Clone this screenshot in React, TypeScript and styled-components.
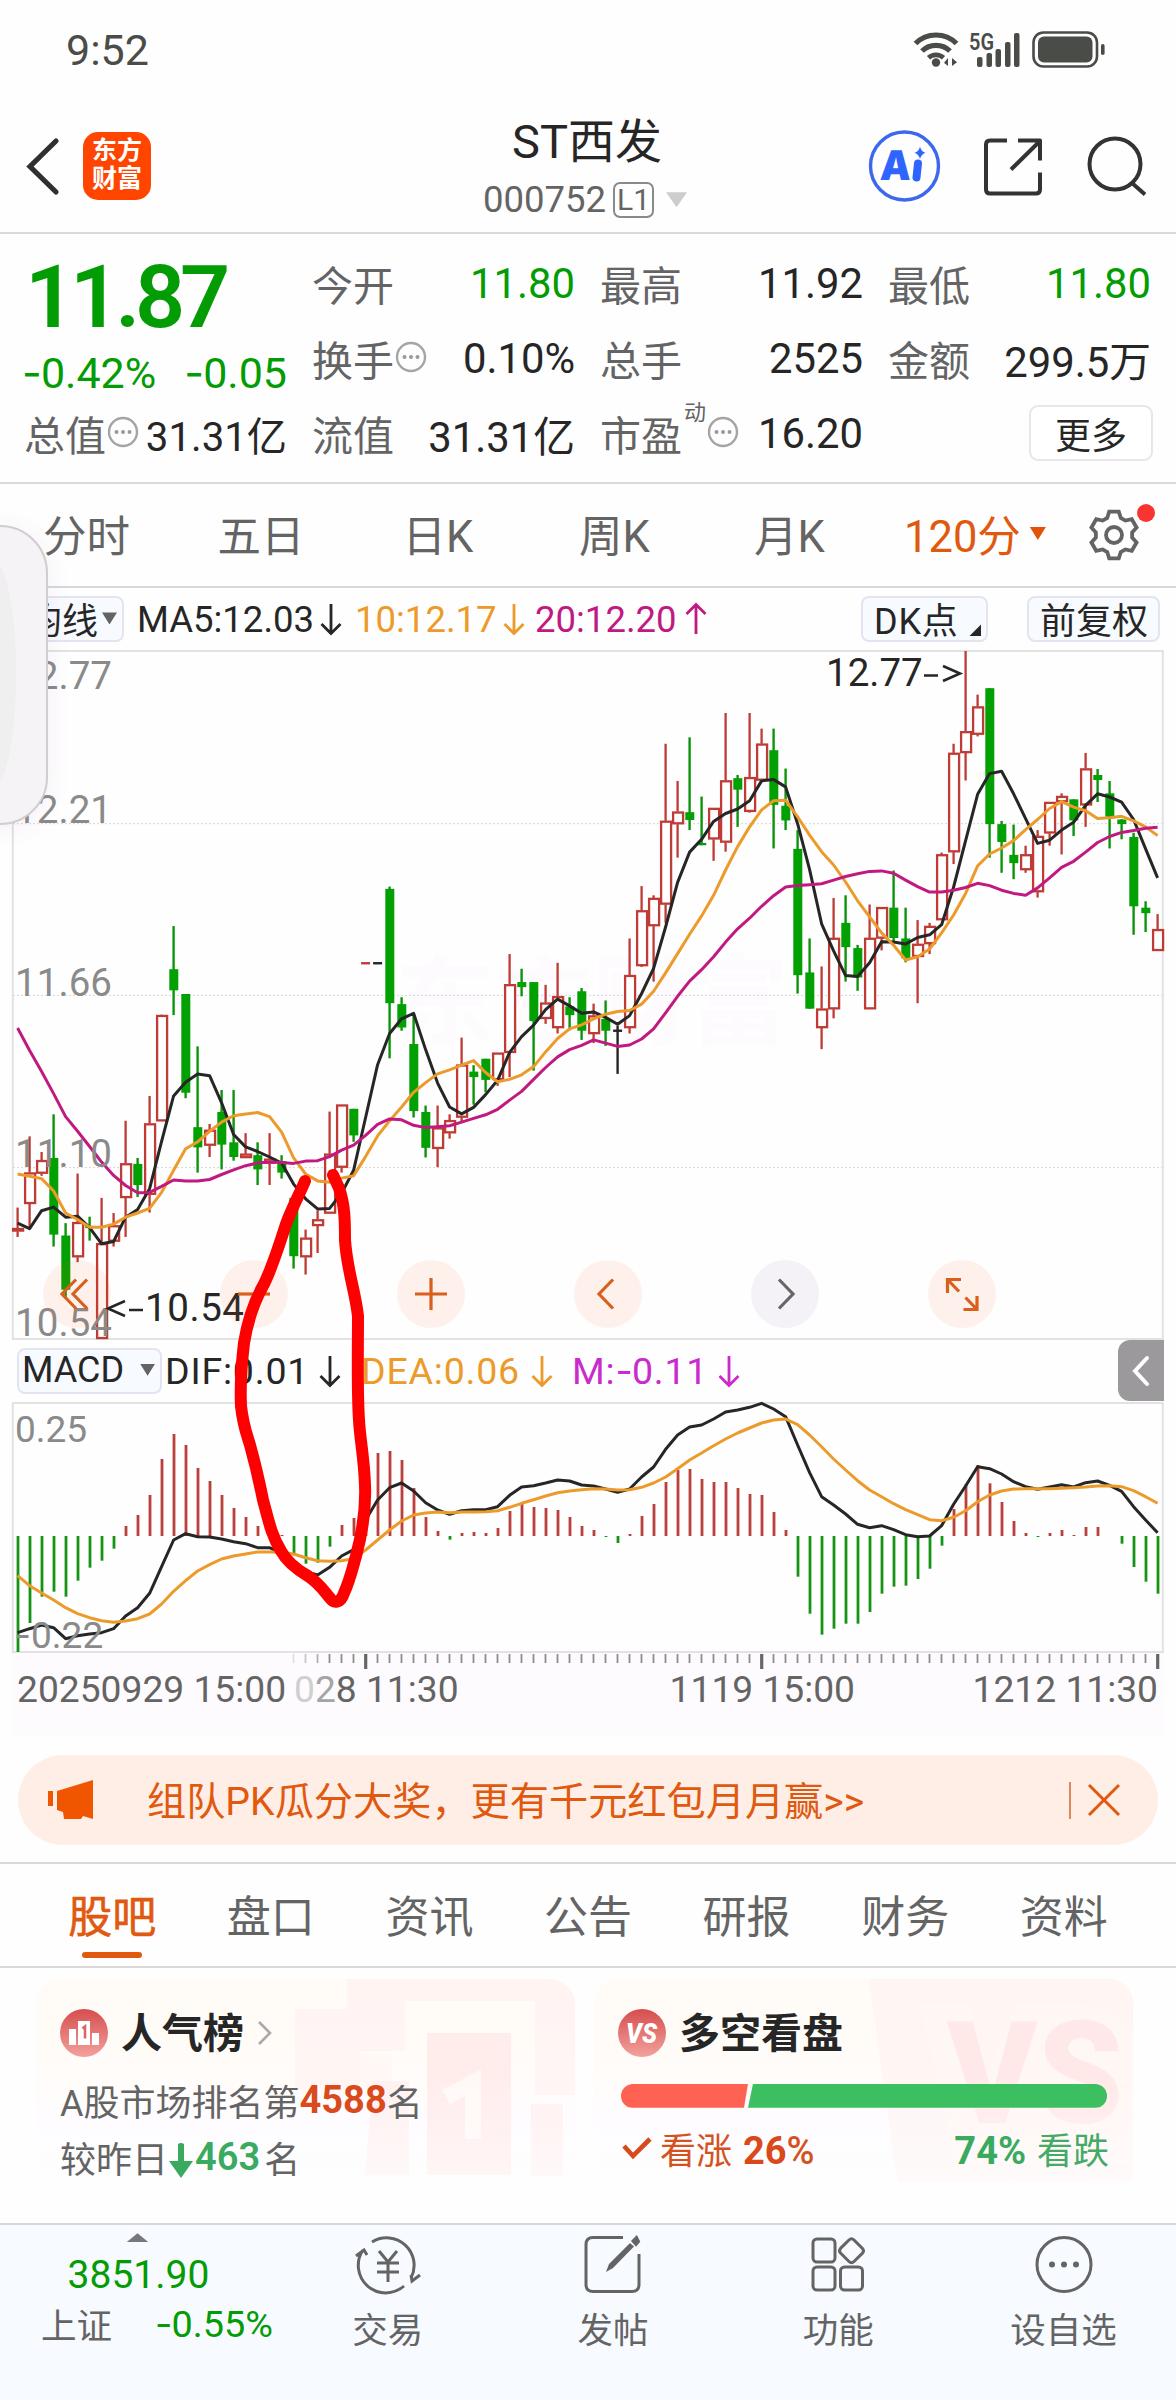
import React from "react";
import styled, { createGlobalStyle } from "styled-components";

const FONT = `Roboto, "Noto Sans CJK SC", sans-serif`;
const ORANGE = "#e0590f";
const GREEN = "#049c04";
const RED = "#bf3b35";
const INK = "#262626";
const GREY = "#646464";
const AMBER = "#ec9b2b";
const PLUM = "#c01a80";

const Global = createGlobalStyle`
  body { margin: 0; background: #fefefe; }
  *, *::before, *::after { box-sizing: border-box; }
`;

const Page = styled.div`
  position: relative;
  width: 1176px;
  height: 2400px;
  overflow: hidden;
  background: #fefefe;
  color: ${INK};
  font-family: ${FONT};
  display: flex;
  flex-direction: column;
`;

/* ---------- status bar ---------- */
const StatusBar = styled.div`
  height: 100px;
  padding: 0 70px 0 66px;
  display: flex;
  align-items: center;
  justify-content: space-between;
  color: #4a4c48;
`;
const Clock = styled.span`font-size: 43px; line-height: 50px;`;

/* ---------- header ---------- */
const Header = styled.header`
  height: 134px;
  border-bottom: 2px solid #dadada;
  padding: 0 28px 0 24px;
  display: grid;
  grid-template-columns: 300px 1fr 300px;
`;
const HeaderLeft = styled.div`
  display: flex;
  gap: 19px;
  padding-top: 32px;
`;
const Logo = styled.div`
  width: 68px;
  height: 68px;
  border-radius: 15px;
  background: #ff4500;
  color: #fff;
  font-size: 25px;
  font-weight: 700;
  line-height: 28px;
  padding-top: 5px;
  text-align: center;
`;
const TitleBlock = styled.div`
  display: flex;
  flex-direction: column;
  align-items: center;
`;
const Title = styled.div`
  margin-top: 12px;
  font-size: 47px;
  line-height: 60px;
  padding-left: 2px;
  white-space: nowrap;
`;
const SubTitle = styled.div`
  display: flex;
  align-items: center;
  height: 40px;
  margin-top: 8px;
  padding-left: 0;
  margin-left: -2px;
  font-size: 36.5px;
  color: ${GREY};
`;
const LevelTag = styled.span`
  border: 2px solid #8a8a8a;
  border-radius: 7px;
  width: 41px;
  height: 36px;
  margin: 0 12px 0 7px;
  font-size: 30px;
  line-height: 32px;
  text-align: center;
`;
const HeaderRight = styled.div`
  display: flex;
  justify-content: flex-end;
  padding-top: 28px;
`;
const Triangle = styled.span<{ $w: number; $h: number; $c: string; $up?: boolean }>`
  display: block;
  flex: none;
  width: ${(p) => p.$w}px;
  height: ${(p) => p.$h}px;
  background: ${(p) => p.$c};
  clip-path: ${(p) => (p.$up ? "polygon(50% 0, 100% 100%, 0 100%)" : "polygon(0 0, 100% 0, 50% 100%)")};
`;

/* ---------- quote ---------- */
const Quote = styled.section`
  height: 251px;
  border-bottom: 2px solid #dadada;
  padding: 12px 23px 0 24px;
  display: grid;
  grid-template-columns: repeat(4, 263px);
  grid-template-rows: repeat(3, 75px);
  column-gap: 25px;
`;
const PriceCell = styled.div`
  grid-row: 1 / span 2;
  color: ${GREEN};
`;
const Price = styled.div`
  padding-left: 1px;
  font-size: 88px;
  font-weight: 600;
  line-height: 101px;
  letter-spacing: -5.2px;
  height: 96px;
`;
const Changes = styled.div`
  display: flex;
  justify-content: space-between;
  font-size: 43px;
  line-height: 60px;
  margin-left: -2px;
`;
const Cell = styled.div`
  display: flex;
  align-items: center;
  justify-content: space-between;
  white-space: nowrap;
`;
const Label = styled.span`
  display: flex;
  align-items: center;
  font-size: 41px;
  color: ${GREY};
`;
const Value = styled.span<{ $c?: string; $size?: number }>`
  font-size: ${(p) => p.$size || 41.8}px;
  color: ${(p) => p.$c || INK};
  padding-top: 1px;
`;
const Sup = styled.sup`
  font-size: 22px;
  line-height: 22px;
  align-self: flex-start;
  margin: -1px 0 0 2px;
`;
const MoreButton = styled.button`
  margin-left: auto;
  margin-right: -2px;
  width: 124px;
  height: 56px;
  border: 2px solid #e7e7e9;
  border-radius: 9px;
  background: #fff;
  font: 36px ${FONT};
  color: ${INK};
  padding: 0 0 6px;
`;
const Dash = styled.span`font-family: Inter, sans-serif; letter-spacing: -0.02em;`;

/* ---------- period tabs ---------- */
const Periods = styled.nav`
  height: 104px;
  border-bottom: 2px solid #d8d8da;
  display: flex;
  align-items: center;
  font-size: 43.5px;
  color: ${GREY};
`;
const Period = styled.span<{ $w: number }>`
  width: ${(p) => p.$w}px;
  flex: none;
  margin-top: -3px;
  text-align: center;
`;
const ActivePeriod = styled.span`
  width: 180px;
  margin-top: -3px;
  padding-left: 27px;
  flex: none;
  display: flex;
  align-items: center;
  gap: 9px;
  color: ${ORANGE};
`;
const GearWrap = styled.span`
  position: relative;
  display: flex;
  margin-left: 30px;
`;
const RedDot = styled.i`
  position: absolute;
  top: -4px;
  right: -14px;
  width: 18px;
  height: 18px;
  border-radius: 50%;
  background: #f93532;
`;

/* ---------- indicator rows ---------- */
const IndicatorRow = styled.div<{ $h: number; $wide?: boolean }>`
  height: ${(p) => p.$h}px;
  padding: 0 16px 0 17px;
  display: flex;
  align-items: center;
  font-size: ${(p) => (p.$wide ? 37.5 : 36.5)}px;
  letter-spacing: ${(p) => (p.$wide ? 0.8 : 0)}px;
  white-space: nowrap;
`;
const Chip = styled.button<{ $w: number; $ml?: string; $tri?: number; $pl?: number }>`
  position: relative;
  width: ${(p) => p.$w}px;
  height: 46px;
  margin: 0 0 0 ${(p) => p.$ml || "0"};
  padding: 0 0 2px ${(p) => p.$pl ?? 7}px;
  display: flex;
  align-items: center;
  justify-content: flex-start;
  gap: ${(p) => p.$tri || 0}px;
  border: 2px solid #e2e5ef;
  border-radius: 8px;
  background: #f7faff;
  color: ${INK};
  font: 36px ${FONT};
  white-space: nowrap;
`;
const Corner = styled.i`
  position: absolute;
  right: 5px;
  bottom: 4px;
  width: 12px;
  height: 12px;
  background: ${INK};
  clip-path: polygon(100% 0, 100% 100%, 0 100%);
`;
const Reading = styled.span<{ $c: string; $w: number; $ml?: number }>`
  color: ${(p) => p.$c};
  width: ${(p) => p.$w}px;
  margin-left: ${(p) => p.$ml || 0}px;
  display: flex;
  align-items: center;
  justify-content: space-between;
`;
const Collapse = styled.button`
  margin: 0 -4px 0 auto;
  width: 46px;
  height: 61px;
  border: 0;
  border-radius: 12px 0 0 12px;
  background: #9b999b;
  display: flex;
  align-items: center;
  justify-content: center;
  padding: 0;
`;

/* ---------- charts ---------- */
const ChartBox = styled.div<{ $h: number }>`
  position: relative;
  height: ${(p) => p.$h}px;
  svg { display: block; overflow: visible; }
`;
const ChartTools = styled.div`
  position: absolute;
  left: 43px;
  bottom: 11px;
  display: flex;
  gap: 109px;
`;
const Tool = styled.button<{ $muted?: boolean }>`
  width: 68px;
  height: 68px;
  border: 0;
  border-radius: 50%;
  padding: 0;
  background: ${(p) => (p.$muted ? "rgba(110, 80, 140, 0.07)" : "rgba(255, 90, 30, 0.08)")};
  color: ${(p) => (p.$muted ? "#666" : "#d8601c")};
`;
const Axis = styled.div`
  height: 84px;
  margin: 0 12px;
  background: #fefbff;
  display: flex;
  align-items: center;
  padding: 0 6px 10px 5px;
  font-size: 37.2px;
  color: ${GREY};
  white-space: nowrap;
`;
const Stamp = styled.span<{ $ml?: string }>`margin-left: ${(p) => p.$ml || "0"};`;
const Fade = styled.span<{ $c: string }>`color: ${(p) => p.$c};`;

/* ---------- banner ---------- */
const Banner = styled.div`
  margin: 19px 18px 17px;
  height: 90px;
  border-radius: 45px;
  background: #ffeee6;
  display: flex;
  align-items: center;
  padding: 0 37px 0 29px;
  font-size: 39.2px;
  color: ${ORANGE};
  white-space: nowrap;
`;
const BannerText = styled.span`margin: -5px 0 0 54px; flex: 1;`;
const Divider = styled.i`width: 2px; height: 37px; background: #dc8a5c; margin-right: 16px;`;

/* ---------- content tabs ---------- */
const Tabs = styled.nav`
  height: 106px;
  border-top: 2px solid #d8d8d8;
  border-bottom: 2px solid #d8d8d8;
  padding: 0 33px;
  display: flex;
  font-size: 44px;
`;
const Tab = styled.span<{ $on?: boolean }>`
  flex: 1;
  display: flex;
  flex-direction: column;
  align-items: center;
  line-height: 62px;
  padding-top: 23px;
  color: ${(p) => (p.$on ? ORANGE : GREY)};
  -webkit-text-stroke: ${(p) => (p.$on ? "0.6px" : "0")} currentColor;
  &::after {
    content: "";
    width: 60px;
    height: 6px;
    margin-top: 3px;
    border-radius: 3px;
    background: ${(p) => (p.$on ? ORANGE : "transparent")};
  }
`;

/* ---------- cards ---------- */
const Cards = styled.section`
  height: 256px;
  padding: 11px 43px 0 36px;
  display: grid;
  grid-template-columns: 1fr 1fr;
  gap: 19px;
`;
const Card = styled.div`
  position: relative;
  height: 218px;
  border-radius: 24px;
  padding: 30px 24px 0;
  overflow: hidden;
  background: linear-gradient(180deg, #fffbf6 0%, #fffcf9 45%, #fefcff 65%, #fefefe 92%);
`;
const CardArt = styled.svg`
  position: absolute;
  right: 0;
  top: 0;
  -webkit-mask-image: linear-gradient(180deg, #000 45%, rgba(0, 0, 0, 0.45) 92%, transparent 94%);
  mask-image: linear-gradient(180deg, #000 45%, rgba(0, 0, 0, 0.45) 92%, transparent 94%);
`;
const CardHead = styled.div`
  position: relative;
  display: flex;
  align-items: center;
  height: 48px;
  font-size: 41px;
  font-weight: 700;
  gap: 13px;
`;
const CardName = styled.span`margin-top: -6px;`;
const CardLine = styled.div<{ $mt: number }>`
  position: relative;
  display: flex;
  align-items: center;
  margin-top: ${(p) => p.$mt}px;
  height: 44px;
  font-size: 36px;
  color: ${GREY};
  white-space: nowrap;
`;
const Strong = styled.b<{ $c: string; $m?: string; $wt?: number }>`
  color: ${(p) => p.$c};
  font-size: 38px;
  font-weight: ${(p) => p.$wt || 700};
  margin: ${(p) => p.$m || "0"};
`;
const Side = styled.span<{ $c: string; $ml?: string }>`
  color: ${(p) => p.$c};
  margin-left: ${(p) => p.$ml || "0"};
`;
const VoteBar = styled.div`
  position: relative;
  display: flex;
  height: 24px;
  width: 486px;
  margin: 27px 0 0 3px;
  border-radius: 12px;
  overflow: hidden;
`;
const VoteUp = styled.i`
  width: 127px;
  background: #ff6252;
  clip-path: polygon(0 0, 100% 0, calc(100% - 4px) 100%, 0 100%);
`;
const VoteDown = styled.i`
  flex: 1;
  background: #3cbf61;
  clip-path: polygon(5px 0, 100% 0, 100% 100%, 0 100%);
`;

/* ---------- bottom bar ---------- */
const BottomBar = styled.footer`
  height: 177px;
  border-top: 2px solid #d3d6da;
  background: #f7faff;
  display: grid;
  grid-template-columns: 275px repeat(4, 225.3px);
  color: ${GREY};
  font-size: 35.5px;
`;
const IndexCell = styled.div`
  display: flex;
  flex-direction: column;
  align-items: center;
  padding-top: 8px;
`;
const IndexValue = styled.div`
  color: ${GREEN};
  font-size: 39px;
  line-height: 46px;
  margin: 10px 0 0 2px;
`;
const IndexLine = styled.div`
  display: flex;
  align-items: center;
  align-self: stretch;
  justify-content: space-between;
  padding: 0 2px 0 41px;
  height: 50px;
`;
const IndexChange = styled.span`color: ${GREEN}; font-size: 37.8px;`;
const NavItem = styled.div`
  display: flex;
  flex-direction: column;
  align-items: center;
  padding-top: 8px;
  gap: 13px;
  line-height: 46px;
`;

/* ---------- floating layers ---------- */
const EdgeHandle = styled.div`
  position: absolute;
  left: -60px;
  top: 525px;
  width: 108px;
  height: 300px;
  border: 2px solid #cfcdd0;
  border-radius: 48px;
  background: #f6f3f7;
  box-shadow: 0 4px 24px rgba(150, 90, 150, 0.09);
  overflow: hidden;
  &::after {
    content: "";
    position: absolute;
    left: 0;
    top: 30px;
    width: 74px;
    height: 234px;
    border-radius: 0 26px 26px 0 / 0 110px 110px 0;
    background: #efeff0;
  }
`;
const Marker = styled.svg`
  position: absolute;
  left: 0;
  top: 0;
  pointer-events: none;
`;

/* ---------- data ---------- */
const STEP = 12;
const X0 = 17.6;
const px = (i: number) => X0 + STEP * i;
const priceY = (v: number) => (v - 24) / 2.1778;
const macdY = (v: number) => (v - 219) / 3;

// kind, high, body top, body bottom, low
type Candle = [string, number, number, number, number];
const CANDLES: Candle[] = [
  ["r",1236,1281,1288,1300],["r",1081,1160,1228,1282],["r",1115,1133,1162,1167],["g",1033,1128,1295,1321],
  ["g",1270,1297,1415,1435],["r",1162,1268,1344,1355],["g",1256,1276,1281,1308],["r",1215,1314,1522,1522],
  ["r",1248,1275,1310,1321],["r",1047,1140,1215,1300],["g",1128,1141,1187,1213],["r",993,1053,1208,1247],
  ["r",816,817,1048,1048],["g",623,717,763,817],["g",771,771,986,998],["g",885,1061,1105,1160],
  ["r",1054,1067,1101,1126],["g",980,1028,1099,1153],["g",980,1094,1126,1134],["r",1074,1119,1128,1128],
  ["g",1094,1122,1153,1187],["r",1074,1130,1140,1187],["g",1122,1135,1160,1173],["g",1212,1215,1342,1369],
  ["r",1284,1302,1344,1382],["r",1242,1262,1276,1335],["r",1027,1119,1249,1249],["r",1012,1012,1149,1160],
  ["g",1021,1021,1079,1093],["rd",704,704,704,704],["kd",704,704,704,704],["g",537,542,791,911],
  ["g",778,793,844,851],["g",818,880,1026,1040],["g",1014,1028,1106,1127],["r",1014,1062,1108,1148],
  ["r",1033,1046,1074,1086],["r",866,925,1040,1050],["g",926,940,952,1012],["g",912,912,958,985],
  ["r",899,899,958,971],["r",684,750,899,952],["g",716,745,756,776],["g",745,745,830,938],
  ["r",751,790,825,836],["r",703,776,845,857],["g",778,798,817,850],["g",758,765,851,871],
  ["r",792,818,858,878],["g",785,825,851,884],["kd",840,851,851,945],["r",650,730,845,857],
  ["r",536,589,710,712],["r",556,562,623,744],["r",226,394,576,616],["r",307,374,401,474],
  ["g",212,375,392,414],["g",341,442,447,447],["r",366,366,434,481],["r",159,306,441,461],
  ["g",294,301,326,407],["r",159,299,374,376],["r",193,226,306,306],["g",193,240,359,454],
  ["g",280,361,393,414],["g",414,455,730,770],["g",650,724,803,803],["r",711,803,845,891],
  ["r",562,649,804,824],["g",556,616,669,744],["g",664,671,735,764],["r",576,649,804,804],
  ["r",582,582,650,676],["g",502,583,649,660],["g",583,650,693,702],["r",610,662,690,791],
  ["r",616,623,662,684],["r",463,467,610,610],["r",226,246,462,488],["r",24,199,246,306],
  ["r",119,145,206,210],["g",105,105,401,474],["g",394,401,440,507],["g",402,468,486,521],
  ["r",448,467,501,507],["r",414,427,549,561],["r",353,353,421,448],["r",334,340,353,467],
  ["g",347,347,393,427],["r",246,280,360,407],["g",281,294,305,353],["g",307,334,385,454],
  ["g",390,391,401,434],["g",420,429,580,642],["g",569,583,595,636],["r",597,630,677,677],
];
const MA5 = [1270,1282,1243,1235,1257,1255,1280,1315,1310,1257,1240,1195,1092,993,963,945,949,1008,1077,1104,1114,1126,1139,1185,1217,1239,1238,1205,1155,1040,925,857,825,813,892,965,1017,1032,1018,990,959,898,864,839,805,782,797,813,810,822,837,818,770,715,625,528,462,434,395,378,368,350,307,304,320,400,500,618,677,731,733,703,657,658,662,648,642,620,538,437,336,291,286,335,389,443,436,414,397,360,335,342,353,391,455,518];
const MA10 = [1163,1168,1173,1200,1248,1262,1279,1279,1272,1257,1248,1238,1203,1155,1108,1093,1070,1050,1036,1032,1029,1038,1072,1128,1163,1178,1181,1172,1167,1125,1080,1047,1017,985,964,945,936,926,916,942,962,957,947,929,897,868,847,838,825,815,809,807,793,765,725,683,641,601,556,501,450,407,370,350,349,385,425,461,490,527,568,603,638,665,697,690,673,638,599,552,492,466,453,437,413,391,367,352,364,372,389,387,384,394,407,426];
const MA20 = [845,894,940,988,1038,1070,1103,1137,1166,1188,1204,1203,1190,1176,1178,1178,1175,1164,1154,1145,1139,1137,1138,1140,1135,1134,1125,1111,1100,1079,1055,1043,1045,1057,1062,1060,1058,1050,1042,1034,1022,1002,983,957,931,908,892,883,871,878,885,882,869,847,812,776,743,718,690,658,629,606,580,557,538,535,533,531,523,515,509,504,503,508,523,537,549,549,545,539,530,535,545,552,556,540,518,495,482,462,441,428,419,415,410,408];
const ZERO = 618;
const BARS = [966,879,800,785,800,752,713,692,656,588,555,495,387,312,345,414,453,495,534,561,588,605,615,676,701,698,650,585,564,480,369,363,390,474,561,603,629,609,606,609,594,543,519,531,534,540,561,588,600,621,639,612,558,522,456,420,417,447,456,456,474,492,495,546,600,740,851,914,896,881,881,846,791,770,767,747,716,647,537,463,405,460,516,573,609,621,609,600,615,591,591,618,641,711,755,791];
const DIF = [908,896,885,893,926,917,912,908,896,858,833,790,710,630,611,620,621,627,635,641,653,653,670,697,725,735,712,678,659,570,510,473,459,483,518,540,553,542,539,539,530,496,471,467,459,450,453,465,468,477,487,477,441,411,358,315,291,285,267,246,240,232,220,237,260,345,428,500,525,552,583,593,587,599,614,620,618,587,523,468,410,416,432,455,470,478,471,464,471,458,453,466,484,530,570,608];
const DEA = [737,767,789,810,833,851,863,872,877,873,866,852,822,784,752,723,704,687,678,672,666,666,667,672,683,692,694,692,686,660,630,600,573,555,549,546,548,546,546,545,542,532,520,509,498,488,483,479,476,477,480,479,472,459,441,416,390,369,347,327,309,294,279,270,267,284,315,350,387,420,452,480,500,521,539,554,569,572,562,542,515,495,483,477,476,476,476,475,473,471,468,467,470,482,500,520];

const points = (s: number[], y: (v: number) => number) => s.map((v, i) => `${px(i)},${y(v).toFixed(1)}`).join(" ");

function CandleMark({ c, i }: { c: Candle; i: number }) {
  const x = px(i);
  const [k, h, t, b, l] = [c[0], ...c.slice(1).map((v) => priceY(v as number))] as Candle;
  if (k.endsWith("d")) {
    const color = k === "rd" ? RED : INK;
    return (
      <g stroke={color} strokeWidth={2.4}>
        <line x1={x - 4.5} x2={x + 4.5} y1={t} y2={t} />
        {l > h && <line x1={x} x2={x} y1={h} y2={l} />}
      </g>
    );
  }
  if (k === "g")
    return (
      <g>
        <line x1={x} x2={x} y1={h} y2={l} stroke="#0c940c" strokeWidth={2.4} />
        <rect x={x - 4.3} y={t} width={9} height={Math.max(2, b - t)} fill="#03a003" />
      </g>
    );
  return (
    <g stroke={RED} strokeWidth={2.3}>
      {t > h && <line x1={x} x2={x} y1={h} y2={t} />}
      {l > b && <line x1={x} x2={x} y1={b} y2={l} />}
      <rect x={x - 4.5} y={t + 0.8} width={10} height={Math.max(1.5, b - t - 1.6)} fill="#fff" />
    </g>
  );
}

function PriceChart() {
  const labels: [string, number][] = [["12.77", 38], ["12.21", 172], ["11.66", 344.5], ["11.10", 515.5], ["10.54", 685]];
  return (
    <svg width={1176} height={688} fontFamily={FONT}>
      <rect x={12.8} y={0} width={1150} height={688} fill="none" stroke="#e2e2e2" strokeWidth={2} />
      <text x={396} y={386} fontSize={98} fontWeight={700} fill="#fefbfe">东方财富</text>
      {[172.7, 344.4, 516.6].map((y) => (
        <line key={y} x1={13} x2={1162} y1={y} y2={y} stroke="#d9d4d9" strokeWidth={1} strokeDasharray="2 2" />
      ))}
      {CANDLES.map((c, i) => <CandleMark key={i} c={c} i={i} />)}
      <g fill="none" strokeWidth={3} strokeLinejoin="round">
        <polyline points={points(MA5, priceY)} stroke={INK} />
        <polyline points={points(MA10, priceY)} stroke={AMBER} />
        <polyline points={points(MA20, priceY)} stroke={PLUM} />
      </g>
      <g fontSize={38.5} fill="#8a8a8a">
        {labels.map(([t, y]) => <text key={t} x={15} y={y} textLength={97}>{t}</text>)}
      </g>
      <g fontSize={38.5} fill={INK}>
        <text x={826} y={35}>12.77</text>
        <text x={145} y={670} textLength={99}>10.54</text>
      </g>
      <g stroke={INK} strokeWidth={2.6} fill="none">
        <path d="M924 24.5h14M943 15l17 7.500-17 7.500M143 659h-14M125 650l-17 7.500 17 7.500" />
      </g>
    </svg>
  );
}

function MacdChart() {
  return (
    <svg width={1176} height={249} fontFamily={FONT}>
      <rect x={12.8} y={0} width={1150} height={249} fill="none" stroke="#e2e2e2" strokeWidth={2} />
      {BARS.map((v, i) => {
        const up = v < ZERO;
        const a = macdY(Math.min(v, ZERO));
        return <rect key={i} x={px(i) - 1} y={a} width={2.8} height={Math.abs(macdY(v) - macdY(ZERO))} fill={up ? "#b93f3b" : "#159415"} />;
      })}
      <g fill="none" strokeWidth={3} strokeLinejoin="round">
        <polyline points={points(DIF, macdY)} stroke={INK} />
        <polyline points={points(DEA, macdY)} stroke={AMBER} />
      </g>
      <g fontSize={37} fill="#8a8a8a">
        <text x={15} y={38.500}>0.25</text>
        <text x={14} y={244.500}><tspan fontFamily="Inter">-</tspan>0.22</text>
      </g>
      {BARS.map((_, i) => {
        if (i < 23) return null;
        const major = i === 29 || i === 62 || i === 95;
        const opacity = i < 26 ? 0.25 + (i - 23) * 0.22 : 1;
        return <rect key={i} x={px(i) - (major ? 1.5 : 1)} y={251} width={major ? 3.2 : 1.8} height={major ? 15 : 9} fill={major ? "#666" : "#8d8d8d"} opacity={opacity} />;
      })}
    </svg>
  );
}

function TrendArrow({ up }: { up?: boolean }) {
  return (
    <svg width={22} height={34} viewBox="0 0 22 34" fill="none" stroke="currentColor" strokeWidth={2.8}>
      {up ? <path d="M11 32V3M1.500 12L11 2.500 20.500 12" /> : <path d="M11 2v29M1.500 22L11 31.500 20.500 22" />}
    </svg>
  );
}

const InfoSvg = styled.svg`margin: -3px 0 0 1px;`;

function InfoDots() {
  return (
    <InfoSvg width={32} height={32} viewBox="0 0 32 32">
      <circle cx={16} cy={16} r={14} fill="none" stroke="#a5a5a5" strokeWidth={2.4} />
      <g fill="#999"><circle cx={9.500} cy={16} r={2} /><circle cx={16} cy={16} r={2} /><circle cx={22.500} cy={16} r={2} /></g>
    </InfoSvg>
  );
}

// Six teeth, each four corners, turned round the hub in 60° steps.
const TOOTH = [[-6.800, -17], [-4.800, -23.300], [4.800, -23.300], [6.800, -17]];
const GEAR = Array.from({ length: 6 }, (_, k) => {
  const a = (k * Math.PI) / 3;
  return TOOTH.map(([x, y]) => `${(27 + x * Math.cos(a) - y * Math.sin(a)).toFixed(2)},${(27 + x * Math.sin(a) + y * Math.cos(a)).toFixed(2)}`).join(" ");
}).join(" ");

function StatusIcons() {
  return (
    <svg width={194} height={40} viewBox="912 30 194 40">
      <g fill="none" stroke="#4a4c48" strokeWidth={5.200}>
        <path d="M915.500 43.500a29 29 0 0 1 41 0" />
        <path d="M922 51a20 20 0 0 1 28 0" />
        <path d="M928.500 57.800a11 11 0 0 1 15 0" strokeWidth={4.600} />
      </g>
      <circle cx={936} cy={62.500} r={4.200} fill="#4a4c48" />
      <path d="M948 58v8l-4-3.200zM952 66v-8l5 4.300z" fill="#4a4c48" />
      <text x={969} y={49.500} fontFamily="Roboto" fontSize={23} fontWeight={600} fill="#4a4c48" textLength={25} lengthAdjust="spacingAndGlyphs">5G</text>
      <g fill="#4a4c48">
        <rect x={977} y={57} width={5.500} height={10} rx={2} />
        <rect x={986.500} y={53} width={5.500} height={14} rx={2} />
        <rect x={995.500} y={49} width={5.500} height={18} rx={2} />
        <rect x={1005} y={42} width={5.500} height={25} rx={2} />
        <rect x={1014} y={33} width={5.500} height={34} rx={2} />
        <rect x={1038} y={36.500} width={54.500} height={26} rx={6} />
        <rect x={1101} y={44} width={3.600} height={11} rx={1.800} />
      </g>
      <rect x={1033.500} y={32.500} width={63.500} height={34} rx={10} fill="none" stroke="#4a4c48" strokeWidth={2.600} />
    </svg>
  );
}

function ToolIcon({ d, w = 3.2 }: { d: string; w?: number }) {
  return (
    <svg width={68} height={68} viewBox="0 0 68 68" fill="none" stroke="currentColor" strokeWidth={w}><path d={d} /></svg>
  );
}

const TOOLS: [string, boolean?][] = [
  ["M33 19.500L19 34l14 14.500M44 19.500L30 34l14 14.500"],
  ["M18 34h32"],
  ["M18 34h32M34 18v32"],
  ["M39 19.500L25 34l14 14.500"],
  ["M28 19.500L42 34 28 48.500", true],
  ["M19.500 33V19.500h13.500M19.500 19.500L31 31.500M49 36v13.500H35.500M49 49.500L37.500 37.500"],
];

const PERIODS: [string, number][] = [["分时", 173], ["五日", 176], ["日K", 178], ["周K", 175], ["月K", 175]];

function Card1Art() {
  return (
    <CardArt width={280} height={218}>
      <path d="M52 0h202a26 26 0 0 1 26 26v90h-40V22H110v50H65v36H0V30h52z" fill="#fff0f0" opacity={0.6} />
      <path d="M0 30h52v45h45v35H0z" fill="#fff3f1" opacity={0.5} />
      <path d="M132 54h84v142h-84z" fill="#ffeae9" opacity={0.85} />
      <path d="M78 102h36v94H70zM236 125h32v72h-32z" fill="#fff1f0" opacity={0.9} />
      <path d="M151 118l27-14v56" stroke="#fff9f6" strokeWidth={16} fill="none" />
    </CardArt>
  );
}
function Card2Art() {
  return (
    <CardArt width={264} height={218}>
      <path d="M0 0h240a24 24 0 0 1 24 24v190H30z" fill="#fff1ef" opacity={0.65} />
      <path d="M50 24h52l12 78 34-78h48l40 4 28 26v160h-38l-30-62-44 50-60-4z" fill="#fff8f4" opacity={0.8} />
      <text x={78} y={144} fontFamily="Roboto" fontSize={142} fontWeight={900} fill="#ffe9e8" textLength={176} lengthAdjust="spacingAndGlyphs">VS</text>
    </CardArt>
  );
}

export default function App() {
  return (
    <Page>
      <Global />
      <StatusBar>
        <Clock>9:52</Clock>
        <StatusIcons />
      </StatusBar>

      <Header>
        <HeaderLeft>
          <svg width={40} height={68} viewBox="24 132 40 68" fill="none" stroke="#303030" strokeWidth={5.200}>
            <path d="M56 141L30 166.500 56 192" strokeLinecap="round" />
          </svg>
          <Logo>东方<br />财富</Logo>
        </HeaderLeft>
        <TitleBlock>
          <Title>ST西发</Title>
          <SubTitle>
            000752<LevelTag>L1</LevelTag>
            <Triangle $w={21} $h={15} $c="#cdcdcd" />
          </SubTitle>
        </TitleBlock>
        <HeaderRight>
          <svg width={282} height={76} viewBox="866 128 282 76" fill="none" stroke="#333" strokeWidth={4}>
            <circle cx={904.500} cy={166} r={34} stroke="#3b68ee" strokeWidth={3.400} />
            <text x={880} y={180} fontFamily="Inter" fontSize={41} fontWeight={900} fill="#2f64ff" stroke="none" textLength={31} lengthAdjust="spacingAndGlyphs" transform="skewX(-3) translate(9 0)">A</text>
            <path d="M918 163.500l-1.500 14" stroke="#2f64ff" strokeWidth={8} strokeLinecap="round" />
            <path d="M920 146.500q1 5 5.500 6.300-4.500 1.500-5.500 6.500-1-5-5.500-6.500 4.500-1.300 5.500-6.300z" fill="#2f64ff" stroke="none" />
            <path d="M1007 140.500h-17q-4 0-4 4v45q0 4 4 4h46q4 0 4-4v-17M1018 140.500h22v20M1039 142l-28 27.500" strokeLinejoin="round" />
            <circle cx={1115} cy={164} r={25.500} />
            <path d="M1132 183l13 11.500" />
          </svg>
        </HeaderRight>
      </Header>

      <Quote>
        <PriceCell>
          <Price>11.87</Price>
          <Changes>
            <span><Dash>-</Dash>0.42%</span>
            <span><Dash>-</Dash>0.05</span>
          </Changes>
        </PriceCell>
        <Cell><Label>今开</Label><Value $c={GREEN}>11.80</Value></Cell>
        <Cell><Label>最高</Label><Value>11.92</Value></Cell>
        <Cell><Label>最低</Label><Value $c={GREEN}>11.80</Value></Cell>
        <Cell><Label>换手<InfoDots /></Label><Value>0.10%</Value></Cell>
        <Cell><Label>总手</Label><Value>2525</Value></Cell>
        <Cell><Label>金额</Label><Value>299.5万</Value></Cell>
        <Cell><Label>总值<InfoDots /></Label><Value $size={40.2}>31.31亿</Value></Cell>
        <Cell><Label>流值</Label><Value>31.31亿</Value></Cell>
        <Cell><Label>市盈<Sup>动</Sup><InfoDots /></Label><Value>16.20</Value></Cell>
        <Cell><MoreButton>更多</MoreButton></Cell>
      </Quote>

      <Periods>
        {PERIODS.map(([t, w]) => <Period key={t} $w={w}>{t}</Period>)}
        <ActivePeriod>120分<Triangle $w={16} $h={13} $c="#e35206" /></ActivePeriod>
        <GearWrap>
          <svg width={54} height={54} viewBox="0 0 54 54" fill="none" stroke="#646464" strokeWidth={3.800}>
            <polygon points={GEAR} />
            <circle cx={27} cy={27} r={8} />
          </svg>
          <RedDot />
        </GearWrap>
      </Periods>

      <IndicatorRow $h={63}>
        <Chip $w={107} $tri={4}>均线<Triangle $w={15} $h={12} $c="#646464" /></Chip>
        <Reading $c={INK} $w={205} $ml={13}>MA5:12.03<TrendArrow /></Reading>
        <Reading $c={AMBER} $w={170} $ml={13}>10:12.17<TrendArrow /></Reading>
        <Reading $c={PLUM} $w={172} $ml={10}>20:12.20<TrendArrow up /></Reading>
        <Chip $w={127} $ml="auto" $pl={11}><span style={{ letterSpacing: 0.8 }}>DK点</span><Corner /></Chip>
        <Chip $w={133} $ml="39px" $pl={11}>前复权</Chip>
      </IndicatorRow>

      <ChartBox $h={688}>
        <PriceChart />
        <ChartTools>
          {TOOLS.map(([d, muted]) => <Tool key={d} $muted={muted}><ToolIcon d={d} /></Tool>)}
        </ChartTools>
      </ChartBox>

      <IndicatorRow $h={64} $wide>
        <Chip $w={145} $tri={16} $pl={3}>MACD<Triangle $w={15} $h={12} $c="#646464" /></Chip>
        <Reading $c={INK} $w={176} $ml={3}>DIF:0.01<TrendArrow /></Reading>
        <Reading $c={AMBER} $w={192} $ml={20}>DEA:0.06<TrendArrow /></Reading>
        <Reading $c="#c92bcc" $w={168} $ml={19}><span>M:<Dash>-</Dash>0.11</span><TrendArrow /></Reading>
        <Collapse>
          <svg width={18} height={32} viewBox="0 0 18 32" fill="none" stroke="#fff" strokeWidth={4} strokeLinecap="round"><path d="M15 3L3 16l12 13" /></svg>
        </Collapse>
      </IndicatorRow>

      <ChartBox $h={250}>
        <MacdChart />
      </ChartBox>
      <Axis>
        <Stamp>20250929 15:00</Stamp>
        <Stamp $ml="8px"><Fade $c="#cfcfcf">0</Fade><Fade $c="#a5a5a5">2</Fade>8 11:30</Stamp>
        <Stamp $ml="211px">1119 15:00</Stamp>
        <Stamp $ml="auto">1212 11:30</Stamp>
      </Axis>

      <Banner>
        <svg width={46} height={42} viewBox="0 0 46 42" fill="#f05500">
          <path d="M1 12h5v15H1zM10 12L46 1v39l-10-3-2 3H17l-1-7-6-2z" />
        </svg>
        <BannerText>组队PK瓜分大奖，更有千元红包月月赢&gt;&gt;</BannerText>
        <Divider />
        <svg width={34} height={34} viewBox="0 0 34 34" stroke={ORANGE} strokeWidth={3}><path d="M2 2l30 30M32 2L2 32" /></svg>
      </Banner>

      <Tabs>
        {["股吧", "盘口", "资讯", "公告", "研报", "财务", "资料"].map((t, i) => <Tab key={t} $on={i === 0}>{t}</Tab>)}
      </Tabs>

      <Cards>
        <Card>
          <Card1Art />
          <CardHead>
            <svg width={48} height={48} viewBox="0 0 48 48">
              <defs><linearGradient id="badge" x1="0" y1="0" x2="0" y2="1"><stop offset="0" stopColor="#d64e4d" /><stop offset="1" stopColor="#f2a19d" /></linearGradient></defs>
              <circle cx={24} cy={24} r={24} fill="url(#badge)" />
              <path d="M9 20h7v16H9zM18 12h12v24H18zM32 24h7v12h-7z" fill="#fff" />
              <path d="M22.500 19.500l2.500-2v12" stroke="#d96663" strokeWidth={2.600} fill="none" />
            </svg>
            <CardName>人气榜</CardName>
            <svg width={16} height={26} viewBox="0 0 16 26" fill="none" stroke="#aaa" strokeWidth={2.600}><path d="M2 2l11 11L2 24" /></svg>
          </CardHead>
          <CardLine $mt={21}>A股市场排名第<Strong $c="#d94a1c">4588</Strong>名</CardLine>
          <CardLine $mt={13}>
            较昨日
            <svg width={24} height={38} viewBox="0 0 24 38" fill="#3aaa60" style={{ margin: "6px 3px 0 1px" }}><path d="M9 3q3-2 6 0v17h9L12 37 0 20h9z" /></svg>
            <Strong $c="#3aaa60" $wt={600} $m="0 4px 0 -1px">463</Strong>名
          </CardLine>
        </Card>
        <Card>
          <Card2Art />
          <CardHead>
            <svg width={48} height={48} viewBox="0 0 48 48">
              <circle cx={24} cy={24} r={24} fill="url(#badge)" />
              <text x={8} y={34} fontFamily="Roboto" fontSize={27} fontWeight={900} fontStyle="italic" fill="#fff" textLength={31} lengthAdjust="spacingAndGlyphs">VS</text>
            </svg>
            <CardName>多空看盘</CardName>
          </CardHead>
          <VoteBar><VoteUp /><VoteDown /></VoteBar>
          <CardLine $mt={18}>
            <svg width={30} height={24} viewBox="0 0 30 24" fill="none" stroke="#d84a1c" strokeWidth={4.600} style={{ marginLeft: 4 }}><path d="M2 10l9 10L28 3" /></svg>
            <Side $c="#d4521f" $ml="8px">看涨 <Strong $c="#d84a1c" $m="0 0 0 2px">26</Strong><Strong $c="#d4521f" $wt={500}>%</Strong></Side>
            <Side $c="#44aa66" $ml="auto"><Strong $c="#3aaa60" $m="0 2px 0 0">74%</Strong> 看跌</Side>
          </CardLine>
        </Card>
      </Cards>

      <BottomBar>
        <IndexCell>
          <Triangle $w={22} $h={9} $c="#77777c" $up />
          <IndexValue>3851.90</IndexValue>
          <IndexLine>上证<IndexChange><Dash>-</Dash>0.55%</IndexChange></IndexLine>
        </IndexCell>
        <NavItem>
          <svg width={66} height={62} viewBox="0 0 66 62" fill="none" stroke="#646464" strokeWidth={3}>
            <path d="M17 9a27.500 27.500 0 0 1 39 36M49 53A27.500 27.500 0 0 1 8 17M1 23l8-6 3 5M65 42l-8 6-1-6" />
            <path d="M24 18l9 11 9-11M33 29v20M22 30h22M22 39h22" />
          </svg>
          交易
        </NavItem>
        <NavItem>
          <svg width={66} height={62} viewBox="0 0 66 62" fill="none" stroke="#646464" strokeWidth={3}>
            <path d="M43 4.500H13q-7 0-7 7v40q0 7 7 7h39q7 0 7-7V21" />
            <path d="M26 39l3-8L50 10l4 3.500L33 35z" fill="#646464" stroke="none" />
            <path d="M53 8l3.500-3.500 2 4-2.500 3z" fill="#646464" />
          </svg>
          发帖
        </NavItem>
        <NavItem>
          <svg width={66} height={62} viewBox="0 0 66 62" fill="none" stroke="#646464" strokeWidth={3}>
            <rect x={8} y={6} width={22} height={23} rx={4} />
            <rect x={8} y={34} width={22} height={23} rx={4} />
            <rect x={35.500} y={34} width={22} height={23} rx={4} />
            <path d="M44 7q2.500-2.500 5 0l8.500 8.500q2 2.300 0 4.600L49 28.500q-2.500 2.500-5 0L35.500 20q-2-2.300 0-4.600z" />
          </svg>
          功能
        </NavItem>
        <NavItem>
          <svg width={66} height={62} viewBox="0 0 66 62">
            <circle cx={33} cy={31.500} r={27} fill="none" stroke="#646464" strokeWidth={3} />
            <g fill="#646464"><circle cx={21} cy={31.500} r={3} /><circle cx={33} cy={31.500} r={3} /><circle cx={45} cy={31.500} r={3} /></g>
          </svg>
          设自选
        </NavItem>
      </BottomBar>

      <EdgeHandle />
      <Marker width={1176} height={2400} fill="none" stroke="#fe0000" strokeWidth={12} strokeLinecap="round" strokeLinejoin="round">
        <path d="M305 1181C300 1193 292 1208 286 1224C279 1246 272 1268 264 1284C256 1298 248 1318 244 1343C242 1360 240 1385 241 1406C243 1425 246 1432 250 1445C255 1463 259 1480 263 1500C268 1518 271 1535 281 1551C287 1562 296 1569 308 1576C320 1584 324 1591 330 1598C334 1604 341 1603 344 1593C350 1580 352 1570 356 1556C363 1530 366 1508 365 1485C364 1456 360 1440 359 1420C357 1390 358 1350 358 1316C355 1290 347 1270 345 1240C345 1222 345 1205 339 1188L333 1175" />
      </Marker>
    </Page>
  );
}
